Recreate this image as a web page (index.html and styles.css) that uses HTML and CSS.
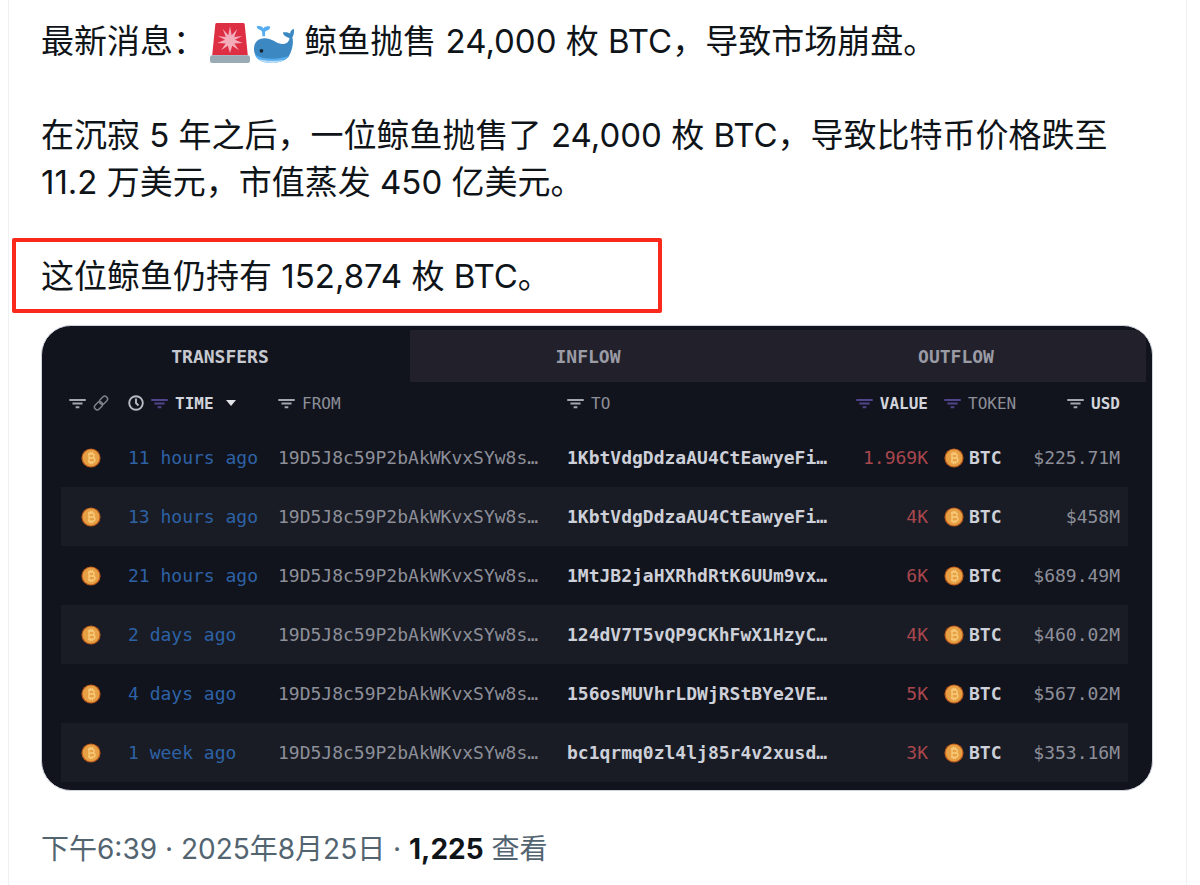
FILE: index.html
```html
<!DOCTYPE html>
<html lang="zh-CN">
<head>
<meta charset="utf-8">
<meta name="viewport" content="width=device-width, initial-scale=1">
<title>最新消息</title>
<link rel="stylesheet" href="styles.css">
</head>
<body>
<svg class="defs" aria-hidden="true">
  <symbol id="filter" viewBox="0 0 18 12"><path d="M0 1h18v2.200H0zM3.500 5h11v2.200h-11zM7 9h4v2.200H7z" fill="currentColor"/></symbol>
  <symbol id="coin" viewBox="0 0 20 20">
    <circle cx="10" cy="10" r="9.600" fill="#b9591c"/>
    <circle cx="10" cy="10" r="8.400" fill="#e8a045"/>
    <path d="M8 5.500v9M7 6h4.200a2 2 0 0 1 0 4H8h3.800a2.100 2.100 0 0 1 0 4.200H7M9.300 4v2M11.300 4v2M9.300 14v2M11.300 14v2" fill="none" stroke="#f8cc7c" stroke-width="1.300"/>
  </symbol>
</svg>
<main class="feed">
  <article class="post">
    <div class="post-text">
      <p>最新消息：<svg class="emoji siren" viewBox="0 0 36 36" role="img" aria-label="警灯"><path d="M4.800 1Q5 0 6.200 0h23.600Q31 0 31.200 1L34 29H2z" fill="#dd2e44"/><path d="M18 3l1.500 8 5-5.500-2.700 7 7.200-.8-6.500 3.300 7 3-7.600.4 4.100 6.100-6-4L18 27l-2-6.500-6 4 4.100-6.100-7.600-.4 7-3L7 11.700l7.200.8-2.700-7 5 5.500z" fill="#f4abba"/><path d="M2 29h32q2 0 2 2v3q0 2-2 2H2q-2 0-2-2v-3q0-2 2-2z" fill="#99aab5"/></svg><svg class="emoji whale" viewBox="0 0 36 36" role="img" aria-label="鲸鱼"><path d="M7.500 12c0-3 .1-5-1.500-5.500C4 6 2.500 5 2.500 3c2.500-.6 4.800-.1 6 2 .9-2.200 3.500-2.600 6-1.800.2 2.200-1.200 3.300-3.500 3.800-1.300.4-1 2.100-1 5z" fill="#55acee"/><path d="M32 13.500C29.500 12.500 26.300 11.500 26 8.500c2-.6 4.500-.2 6.500 1 0-2 1.500-3.500 3.500-4 .2 3-.2 5.500-1.500 7.500 1.500 5-.5 13-3.500 17.500C27.500 34 22 35.500 15 35.500 6 35.500 0 31 0 23.500c0-6.500 4-9.800 9.500-9.800 6.500 0 9.500 4 14.500 5 4.500.9 7.500-1.200 8-5.200z" fill="#3b88c3"/><path d="M.7 28c5 4.500 18 5.500 30.300 2-3 4-8 6-16 6C7 36 2 33 .7 28z" fill="#55acee"/><path d="M4 32.500c6 2 15 2 23 .5-3 2-7 3-12 3s-9-1.500-11-3.500z" fill="#bdddf4"/><circle cx="6.700" cy="25" r="1.700" fill="#17232d"/></svg> 鲸鱼抛售 24,000 枚 BTC，导致市场崩盘。</p>
      <p>在沉寂 5 年之后，一位鲸鱼抛售了 24,000 枚 BTC，导致比特币价格跌至 11.2 万美元，市值蒸发 450 亿美元。</p>
      <p class="marked">这位鲸鱼仍持有 152,874 枚 BTC。</p>
    </div>
    <section class="card">
      <nav class="tabs">
        <button class="tab active" type="button">TRANSFERS</button>
        <button class="tab" type="button">INFLOW</button>
        <button class="tab" type="button">OUTFLOW</button>
      </nav>
      <table class="transfers">
        <colgroup><col class="c-chain"><col class="c-time"><col class="c-addr"><col class="c-addr"><col class="c-num"><col class="c-num"><col class="c-usd"></colgroup>
        <thead>
          <tr>
            <th><span class="head"><svg class="filter"><use href="#filter"/></svg><svg class="link" viewBox="0 0 16 16" fill="none" stroke="currentColor" stroke-width="1.500"><rect x="6" y="2.500" width="9" height="5.500" rx="2.700" transform="rotate(-45 10.500 5.250)"/><rect x="1" y="8" width="9" height="5.500" rx="2.700" transform="rotate(-45 5.500 10.750)"/></svg></span></th>
            <th><span class="head strong"><svg class="clock" viewBox="0 0 16 16" fill="none" stroke="currentColor" stroke-width="1.900"><circle cx="8" cy="8" r="6.800"/><path d="M8 3.500V8l2.500 2.500"/></svg><svg class="filter on"><use href="#filter"/></svg>TIME<svg class="caret" viewBox="0 0 10 6"><path d="M0 0h10L5 6z" fill="currentColor"/></svg></span></th>
            <th><span class="head"><svg class="filter"><use href="#filter"/></svg>FROM</span></th>
            <th><span class="head"><svg class="filter"><use href="#filter"/></svg>TO</span></th>
            <th><span class="head strong end"><svg class="filter on"><use href="#filter"/></svg>VALUE</span></th>
            <th><span class="head"><svg class="filter on"><use href="#filter"/></svg>TOKEN</span></th>
            <th><span class="head strong end"><svg class="filter"><use href="#filter"/></svg>USD</span></th>
          </tr>
        </thead>
        <tbody>
          <tr><td class="chain"><svg class="coin"><use href="#coin"/></svg></td><td class="time">11 hours ago</td><td>19D5J8c59P2bAkWKvxSYw8s…</td><td class="to">1KbtVdgDdzaAU4CtEawyeFi…</td><td class="value">1.969K</td><td><span class="token"><svg class="coin"><use href="#coin"/></svg>BTC</span></td><td class="usd">$225.71M</td></tr>
          <tr><td class="chain"><svg class="coin"><use href="#coin"/></svg></td><td class="time">13 hours ago</td><td>19D5J8c59P2bAkWKvxSYw8s…</td><td class="to">1KbtVdgDdzaAU4CtEawyeFi…</td><td class="value">4K</td><td><span class="token"><svg class="coin"><use href="#coin"/></svg>BTC</span></td><td class="usd">$458M</td></tr>
          <tr><td class="chain"><svg class="coin"><use href="#coin"/></svg></td><td class="time">21 hours ago</td><td>19D5J8c59P2bAkWKvxSYw8s…</td><td class="to">1MtJB2jaHXRhdRtK6UUm9vx…</td><td class="value">6K</td><td><span class="token"><svg class="coin"><use href="#coin"/></svg>BTC</span></td><td class="usd">$689.49M</td></tr>
          <tr><td class="chain"><svg class="coin"><use href="#coin"/></svg></td><td class="time">2 days ago</td><td>19D5J8c59P2bAkWKvxSYw8s…</td><td class="to">124dV7T5vQP9CKhFwX1HzyC…</td><td class="value">4K</td><td><span class="token"><svg class="coin"><use href="#coin"/></svg>BTC</span></td><td class="usd">$460.02M</td></tr>
          <tr><td class="chain"><svg class="coin"><use href="#coin"/></svg></td><td class="time">4 days ago</td><td>19D5J8c59P2bAkWKvxSYw8s…</td><td class="to">156osMUVhrLDWjRStBYe2VE…</td><td class="value">5K</td><td><span class="token"><svg class="coin"><use href="#coin"/></svg>BTC</span></td><td class="usd">$567.02M</td></tr>
          <tr><td class="chain"><svg class="coin"><use href="#coin"/></svg></td><td class="time">1 week ago</td><td>19D5J8c59P2bAkWKvxSYw8s…</td><td class="to">bc1qrmq0zl4lj85r4v2xusd…</td><td class="value">3K</td><td><span class="token"><svg class="coin"><use href="#coin"/></svg>BTC</span></td><td class="usd">$353.16M</td></tr>
        </tbody>
      </table>
    </section>
    <footer class="meta">下午6:39 · 2025年8月25日 · <strong>1,225</strong> 查看</footer>
  </article>
</main>
</body>
</html>
```
FILE: styles.css
```css
* { box-sizing: border-box; }
body {
  margin: 0;
  background: #fff;
  color: #0f1419;
  font-family: Inter, "Noto Sans CJK SC", sans-serif;
}
.defs { position: absolute; width: 0; height: 0; }
.feed {
  margin: 0 13px 0 8px;
  border: solid #eff1f3;
  border-width: 0 1px;
}
.post { padding: 18px 33px 17px 32px; }
.post-text {
  font-size: 33px;
  line-height: 47px;
}
.post-text p { margin: 0 0 47px; }
.emoji {
  width: 40px;
  height: 40px;
  vertical-align: -10px;
}
.siren { margin: 0 4px 0 4px; }
.whale { margin-right: 1px; }
.post-text .marked {
  width: 650px;
  max-width: 100%;
  margin: -15px 0 12px -29px;
  padding: 11px 25px 9px;
  border: 4px solid #f92a1c;
  border-radius: 2px;
}
.card {
  overflow: hidden;
  padding: 4px 6px 8px 0;
  border: 1px solid #cfd3dc;
  border-radius: 30px;
  background: #12141d;
  color: #8d8f99;
  font-family: "DejaVu Sans Mono", monospace;
  font-size: 18px;
}
.tabs { display: grid; grid-template-columns: repeat(3, 1fr); }
.tab {
  height: 52px;
  padding: 0 12px 0 0;
  border: 0;
  background: #22212b;
  color: #9b9ba6;
  font: bold 18px "DejaVu Sans Mono", monospace;
}
.tab.active { background: none; color: #c6c8d0; }
.transfers {
  width: calc(100% - 37px);
  margin: 0 18px 0 19px;
  border-collapse: collapse;
  table-layout: fixed;
}
.c-chain { width: 59px; }
.c-time { width: 150px; }
.c-num { width: 88px; }
.c-usd { width: 104px; }
.transfers th, .transfers td {
  padding: 0 8px;
  text-align: left;
  white-space: nowrap;
}
.transfers th {
  height: 46px;
  padding-bottom: 4px;
  font-size: 16px;
  font-weight: 400;
}
.transfers td { height: 59px; }
.transfers tbody tr:nth-child(even) { background: #191c25; }
.head { display: flex; align-items: center; gap: 7px; }
.transfers .strong { color: #d2d4dc; font-weight: 700; }
.end { justify-content: flex-end; }
.filter { flex: none; width: 17px; height: 11px; color: #a5a7af; }
.filter.on { color: #50458c; }
.link { flex: none; width: 16px; height: 16px; color: #7e808a; }
.clock { flex: none; width: 16px; height: 16px; color: #b9bbc2; }
.caret { width: 10px; height: 6px; margin-left: 5px; color: #e2e3e8; }
.coin { display: block; flex: none; width: 20px; height: 20px; }
.transfers .chain { padding-left: 20px; }
.transfers .time { color: #2d62a6; }
.transfers .to { color: #cdd0d8; font-weight: 700; }
.transfers .value { color: #a8474d; text-align: right; }
.transfers .usd { text-align: right; }
.token { display: flex; align-items: center; gap: 5px; color: #cdd0d8; font-weight: 700; }
.meta {
  padding-top: 38px;
  color: #536471;
  font-size: 28px;
  line-height: 40px;
}
.meta strong { color: #0f1419; }
```
